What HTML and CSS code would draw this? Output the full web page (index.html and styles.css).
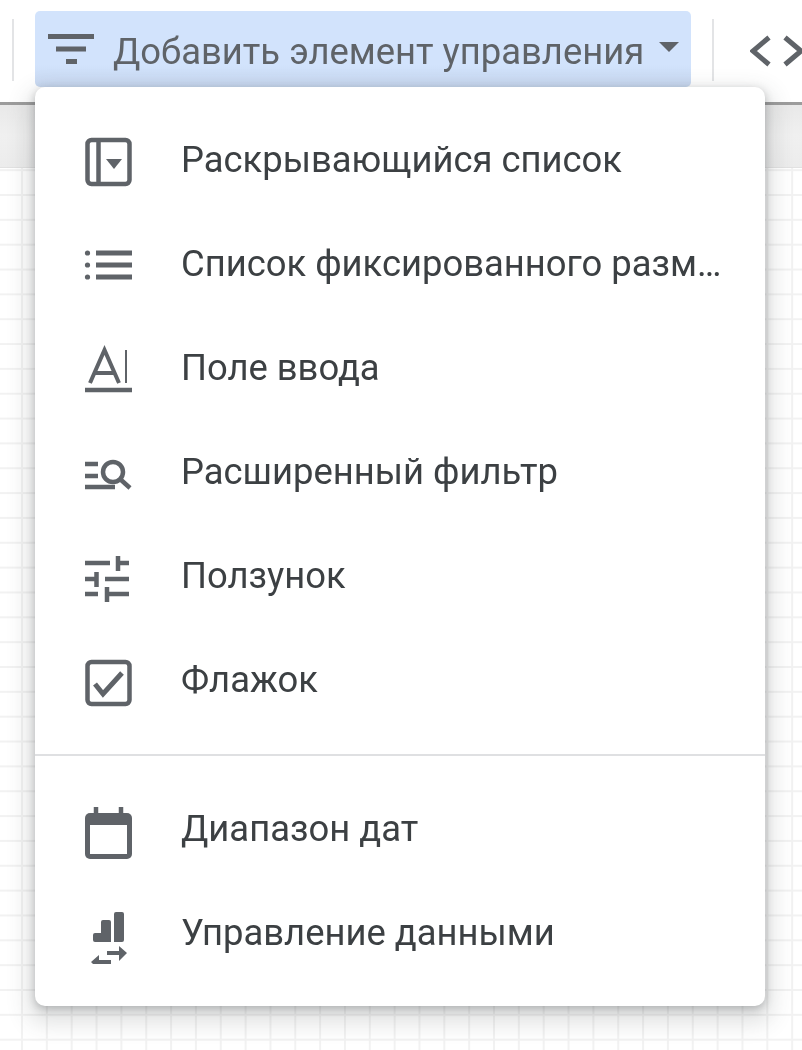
FILE: index.html
```html
<!DOCTYPE html>
<html lang="ru">
<head>
<meta charset="utf-8">
<title>Добавить элемент управления</title>
<link rel="stylesheet" href="styles.css">
</head>
<body>
<div class="page">
  <header class="toolbar">
    <span class="sep"></span>
    <button class="add-btn" type="button">
      <svg class="btn-icon" width="46" height="30" viewBox="0 0 46 30"><path class="st5" d="M0 2.500H46M8 15H38M18 27.500H29"/></svg>
      <span class="btn-label">Добавить элемент управления</span>
      <span class="caret"></span>
    </button>
    <span class="sep sep-right"></span>
    <svg class="code-icon" width="52" height="32" viewBox="0 0 52 32"><path class="st5" d="M19 2.500 3 16 19 29.500M35 2.500 51 16 35 29.500"/></svg>
  </header>
  <div class="band"></div>
  <main class="canvas"></main>

  <nav class="menu">
    <section class="group">
      <div class="item">
        <svg class="icon" viewBox="0 0 62 62"><rect class="st4" x="10.500" y="11" width="42" height="44" rx="4"/><path class="st4" d="M21.500 11V55"/><path class="fill" d="M29 30H45L37 40Z"/></svg>
        <span class="label">Раскрывающийся список</span>
      </div>
      <div class="item">
        <svg class="icon" viewBox="0 0 62 62"><circle class="fill" cx="10.500" cy="20" r="2.600"/><circle class="fill" cx="10.500" cy="32" r="2.600"/><circle class="fill" cx="10.500" cy="44" r="2.600"/><path class="st5" d="M19 20H55M19 32H55M19 44H55"/></svg>
        <span class="label">Список фиксированного размера</span>
      </div>
      <div class="item">
        <svg class="icon" viewBox="0 0 62 62"><path class="st-a" d="M13 46 27.500 13 42 46M18.500 36H36.500"/><path class="st2" d="M49 13V46"/><path class="st4" d="M8 53H55"/></svg>
        <span class="label">Поле ввода</span>
      </div>
      <div class="item">
        <svg class="icon" viewBox="0 0 62 62"><path class="st4" d="M8 23H21M8 35H21M8 46H38"/><circle class="st4" cx="36" cy="31" r="10"/><path class="st4" d="M43 38 53 47"/></svg>
        <span class="label">Расширенный фильтр</span>
      </div>
      <div class="item">
        <svg class="icon" viewBox="0 0 62 62"><path class="st4" d="M8 18H33M41 18H52M41 11V26M8 34H19.500M19.500 27V42M28 34H52M8 49H21M30 49H52M30 42V57"/></svg>
        <span class="label">Ползунок</span>
      </div>
      <div class="item">
        <svg class="icon" viewBox="0 0 62 62"><rect class="st4" x="10.500" y="13" width="42" height="42" rx="4"/><path class="st5" d="M18 35 26 45 45 24"/></svg>
        <span class="label">Флажок</span>
      </div>
    </section>
    <section class="group group-second">
      <div class="item">
        <svg class="icon" viewBox="0 0 62 62"><rect class="fill" x="8" y="15" width="47" height="46" rx="5"/><rect class="paper" x="13" y="27" width="37" height="29"/><path class="st4" d="M19 9V16M44 9V16"/></svg>
        <span class="label">Диапазон дат</span>
      </div>
      <div class="item">
        <svg class="icon" viewBox="0 0 62 62"><path class="fill" d="M16 33a2 2 0 0 1 2-2H24V20a2 2 0 0 1 2-2H32a2 2 0 0 1 2 2V40H18a2 2 0 0 1-2-2ZM37 12a2 2 0 0 1 2-2H45a2 2 0 0 1 2 2V38a2 2 0 0 1-2 2H37Z"/><path class="fill" d="M30 49H42V44L50 51 42 59V53H30ZM34 58H22V53L14 60 22 68V62H34Z"/></svg>
        <span class="label">Управление данными</span>
      </div>
    </section>
  </nav>
</div>
</body>
</html>
```
FILE: styles.css
```css
html, body {
  margin: 0;
  height: 100%;
  overflow: hidden;
  background: #fff;
}

.page {
  position: relative;
  display: flex;
  flex-direction: column;
  height: 1050px;
  font-family: Roboto, "Liberation Sans", sans-serif;
  filter: blur(0.6px);
}

.toolbar {
  display: flex;
  flex: none;
  align-items: flex-start;
  height: 91px;
  padding: 11px 0 0 12px;
  background: #fff;
  border-bottom: 3px solid #9c9c9c;
  overflow: hidden;
}

.sep {
  flex: none;
  width: 2px;
  height: 62px;
  margin: 8px 21px 0 0;
  background: #e3e4e6;
}

.sep-right {
  margin: 8px 0 0 21px;
}

.add-btn {
  display: flex;
  flex: none;
  align-items: center;
  width: 656px;
  height: 76px;
  padding: 0 0 0 13px;
  border: 0;
  border-radius: 5px;
  background: linear-gradient(#d2e3fc 70%, #c8d8f0);
  color: #5f6368;
  font: inherit;
  font-size: 36.400px;
}

.btn-icon {
  flex: none;
  margin-right: 19px;
}

.btn-label {
  margin-top: 4px;
  white-space: nowrap;
}

.caret {
  flex: none;
  width: 0;
  height: 0;
  margin: -4px 0 0 15px;
  border-top: 10px solid #5f6368;
  border-left: 10px solid transparent;
  border-right: 10px solid transparent;
}

.code-icon {
  flex: none;
  margin: 24px 0 0 36px;
}

.band {
  flex: none;
  height: 62px;
  background: linear-gradient(#e9e9e9, #f0f0f0 50%, #ececec);
  border-bottom: 1px solid #e2e2e2;
}

.canvas {
  flex: 1;
  background-color: #fff;
  background-image:
    linear-gradient(to right, #f2f2f2 2px, transparent 2px),
    linear-gradient(to bottom, #f2f2f2 2px, transparent 2px);
  background-size: 24.850px 24.850px;
  background-position: 21px 1.150px;
}

.menu {
  position: absolute;
  top: 87px;
  left: 35px;
  width: 730px;
  height: 919px;
  padding: 21px 0;
  box-sizing: border-box;
  background: #fff;
  border-radius: 10px;
  box-shadow: 0 3px 8px rgba(60, 64, 67, 0.3), 0 10px 21px 8px rgba(60, 64, 67, 0.15);
}

.group-second {
  margin-top: 22px;
  padding-top: 21px;
  border-top: 2px solid #dfe0e2;
}

.item {
  display: flex;
  align-items: center;
  height: 104px;
  padding: 0 42px;
}

.icon {
  flex: none;
  width: 62px;
  height: 62px;
  margin-right: 42px;
}

.label {
  flex: 1;
  min-width: 0;
  margin-top: -2px;
  overflow: hidden;
  color: #3c4043;
  font-size: 36.400px;
  white-space: nowrap;
  text-overflow: ellipsis;
}

.fill {
  fill: #5f6368;
}

.paper {
  fill: #fff;
}

.st2, .st4, .st5, .st-a {
  fill: none;
  stroke: #5f6368;
}

.st2 { stroke-width: 2px; }
.st4 { stroke-width: 4.500px; }
.st5 { stroke-width: 5px; }
.st-a { stroke-width: 4px; }
```
